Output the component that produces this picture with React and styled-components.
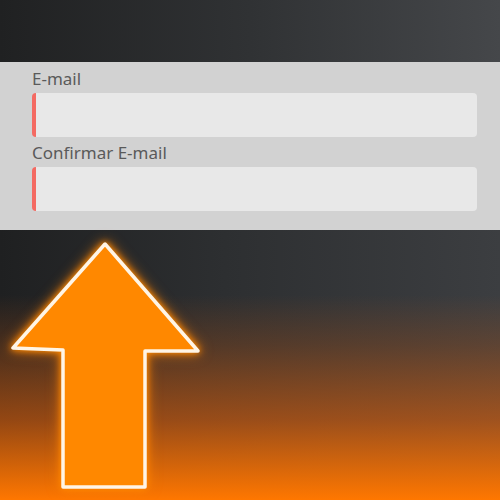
import React from 'react';
import styled, { createGlobalStyle } from 'styled-components';

const Global = createGlobalStyle`
  html, body { margin: 0; padding: 0; }
  body { font-family: "Noto Sans", "Open Sans", sans-serif; }
`;

const Page = styled.div`
  width: 500px;
  height: 500px;
  overflow: hidden;
  display: flex;
  flex-direction: column;
  background:
    linear-gradient(180deg,
      rgba(255, 118, 0, 0) 0,
      rgba(255, 118, 0, 0) 295px,
      rgba(170, 80, 20, 0.3) 345px,
      rgba(220, 95, 10, 0.62) 420px,
      #ff7700 500px),
    linear-gradient(90deg, #1f2021 0%, #2d2f31 45%, #3c3e41 100%);
`;

const TopBar = styled.div`
  height: 62px;
  flex-shrink: 0;
  background: linear-gradient(90deg, #202122 0%, #303234 50%, #45474a 100%);
`;

const Panel = styled.form`
  height: 168px;
  box-sizing: border-box;
  background: #d2d2d2;
  padding: 4px 23px 0 32px;
  display: flex;
  flex-direction: column;
`;

const Label = styled.label`
  font-size: 17px;
  line-height: 26px;
  color: #5a5a5a;
  margin-top: ${p => p.$first ? '0' : '3px'};
  margin-bottom: 1px;
`;

const Input = styled.input`
  height: 44px;
  box-sizing: border-box;
  border: none;
  border-left: 4px solid #f46a62;
  border-radius: 4px;
  background: #e8e8e8;
  outline: none;
  padding: 0 12px;
  font: inherit;
`;

const ArrowArea = styled.div`
  padding: 5px 0 0 5px;
`;

const ArrowSvg = styled.svg`
  display: block;
  filter: drop-shadow(0 0 3px #ff8a00) drop-shadow(0 0 6px rgba(255, 130, 0, 0.8));
`;

const UpArrow = () => (
  <ArrowSvg width="200" height="260" viewBox="0 0 200 260">
    <polygon
      points="100,9 8,113 58,115 58,252 140,252 140,116 193,116"
      fill="#ff8800"
      stroke="#fff5e6"
      strokeWidth="3.5"
      strokeLinejoin="round"
    />
  </ArrowSvg>
);

export default function App() {
  return (
    <Page>
      <Global />
      <TopBar />
      <Panel>
        <Label $first>E-mail</Label>
        <Input type="email" />
        <Label>Confirmar E-mail</Label>
        <Input type="email" />
      </Panel>
      <ArrowArea>
        <UpArrow />
      </ArrowArea>
    </Page>
  );
}
